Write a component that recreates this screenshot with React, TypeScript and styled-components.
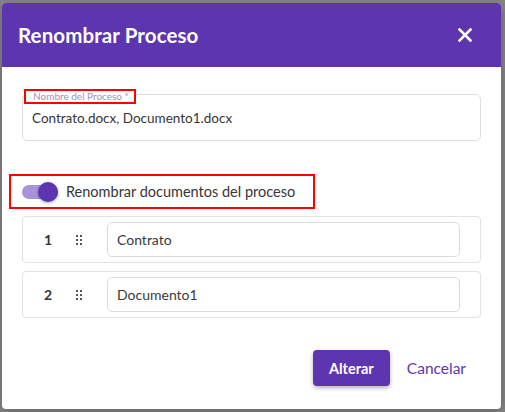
import React from "react";
import styled, { createGlobalStyle } from "styled-components";

const Global = createGlobalStyle`
  html, body { margin: 0; padding: 0; }
  body { font-family: Lato, "Noto Sans", sans-serif; background: #858585; }
  * { box-sizing: border-box; }
`;

const Backdrop = styled.div`
  width: 505px;
  height: 412px;
  background: #858585;
  padding: 3px 4px 3px 2px;
  display: flex;
`;

const Dialog = styled.div`
  width: 499px;
  height: 406px;
  background: #fff;
  border-radius: 4px;
  overflow: hidden;
  display: flex;
  flex-direction: column;
  box-shadow: 0 4px 14px rgba(0, 0, 0, 0.25);
`;

const Header = styled.div`
  height: 64px;
  flex: none;
  background: #5e35b1;
  display: flex;
  align-items: center;
  justify-content: space-between;
  padding: 0 29px 0 16px;
`;

const Title = styled.h2`
  margin: 0;
  color: #fff;
  font-size: 20.5px;
  font-weight: 700;
  letter-spacing: 0.1px;
`;

const CloseBtn = styled.button`
  border: 0;
  background: none;
  padding: 0;
  width: 14px;
  height: 14px;
  display: flex;
  cursor: pointer;
`;

const Body = styled.div`
  flex: 1;
  display: flex;
  flex-direction: column;
  padding: 27px 20px 0 20px;
`;

const Field = styled.div`
  position: relative;
  height: 47px;
  border: 1px solid #dedede;
  border-radius: 5px;
  display: flex;
  align-items: center;
  padding: 0 9px;
  font-size: 13.5px;
  color: #363636;
`;

const FloatLabel = styled.span`
  position: absolute;
  left: 1px;
  top: -6px;
  height: 15px;
  padding: 0 5px 0 7px;
  border: 2px solid #ff0000;
  background: #fff;
  font-size: 10px;
  line-height: 11px;
  color: #9a9a9a;
`;

const SwitchRow = styled.label`
  margin: 33px 0 0 -13px;
  width: 306px;
  height: 35px;
  border: 2px solid #ff0000;
  display: flex;
  align-items: center;
  padding-left: 11px;
  gap: 8px;
  font-size: 14.5px;
  color: #363636;
`;

const Track = styled.span`
  position: relative;
  width: 36px;
  height: 14px;
  border-radius: 7px;
  background: #a993db;
  flex: none;
`;

const Thumb = styled.span`
  position: absolute;
  right: 0;
  top: -3px;
  width: 20px;
  height: 20px;
  border-radius: 50%;
  background: #5e35b1;
  box-shadow: 0 1px 3px rgba(0, 0, 0, 0.35);
`;

const List = styled.div`
  margin-top: 7px;
  display: flex;
  flex-direction: column;
  gap: 8px;
`;

const Row = styled.div`
  height: 47px;
  border: 1px solid #e2e2e2;
  border-radius: 4px;
  display: flex;
  align-items: center;
  padding: 0 20px 0 21px;
`;

const Num = styled.span`
  width: 32px;
  font-size: 14px;
  font-weight: 700;
  color: #333;
`;

const Handle = styled.span`
  width: 31px;
  display: flex;
  align-items: center;
`;

const RowInput = styled.div`
  flex: 1;
  height: 35px;
  border: 1px solid #dcdcdc;
  border-radius: 5px;
  display: flex;
  align-items: center;
  padding: 0 9px;
  font-size: 14px;
  color: #3a3a3a;
`;

const Actions = styled.div`
  margin-top: 32px;
  display: flex;
  justify-content: flex-end;
  align-items: center;
  gap: 9px;
  padding-right: 7px;
`;

const Primary = styled.button`
  width: 77px;
  height: 36px;
  border: 0;
  border-radius: 4px;
  background: #5e35b1;
  color: #fff;
  font-family: inherit;
  font-size: 14.5px;
  font-weight: 700;
  box-shadow: 0 2px 4px rgba(0, 0, 0, 0.3);
`;

const TextBtn = styled.button`
  height: 36px;
  border: 0;
  background: none;
  padding: 0 8px;
  color: #5e35b1;
  font-family: inherit;
  font-size: 15.5px;
`;

const DragIcon = () => (
  <svg width="7" height="10" viewBox="0 0 7 10">
    {[0, 4].map((x) =>
      [0, 4, 8].map((y) => (
        <rect key={`${x}-${y}`} x={x} y={y} width="2" height="2" fill="#555" />
      ))
    )}
  </svg>
);

const items = ["Contrato", "Documento1"];

export default function App() {
  return (
    <>
      <Global />
      <Backdrop>
        <Dialog>
          <Header>
            <Title>Renombrar Proceso</Title>
            <CloseBtn aria-label="Cerrar">
              <svg width="14" height="14" viewBox="0 0 14 14">
                <path d="M1.5 1.5 L12.5 12.5 M12.5 1.5 L1.5 12.5" stroke="#fff" strokeWidth="2.6" strokeLinecap="square" />
              </svg>
            </CloseBtn>
          </Header>
          <Body>
            <Field>
              <FloatLabel>Nombre del Proceso *</FloatLabel>
              Contrato.docx, Documento1.docx
            </Field>
            <SwitchRow>
              <Track>
                <Thumb />
              </Track>
              Renombrar documentos del proceso
            </SwitchRow>
            <List>
              {items.map((t, i) => (
                <Row key={t}>
                  <Num>{i + 1}</Num>
                  <Handle>
                    <DragIcon />
                  </Handle>
                  <RowInput>{t}</RowInput>
                </Row>
              ))}
            </List>
            <Actions>
              <Primary>Alterar</Primary>
              <TextBtn>Cancelar</TextBtn>
            </Actions>
          </Body>
        </Dialog>
      </Backdrop>
    </>
  );
}
